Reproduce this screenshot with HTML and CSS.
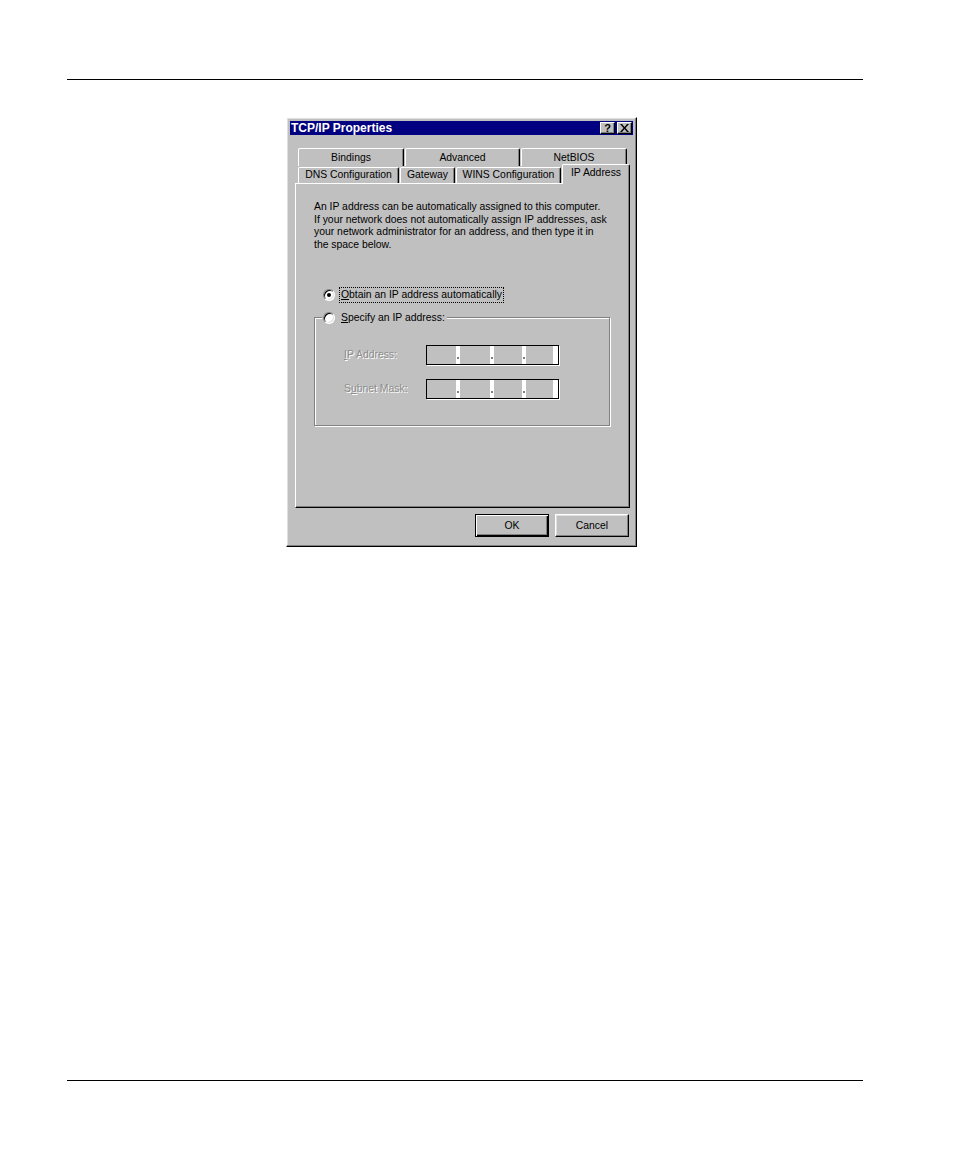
FILE: index.html
```html
<!DOCTYPE html>
<html>
<head>
<meta charset="utf-8">
<title>TCP/IP Properties</title>
<link rel="stylesheet" href="styles.css">
</head>
<body>
<div class="page">
  <div class="rule"></div>
  <div class="dialog">
    <div class="titlebar">
      <span class="title">TCP/IP Properties</span>
      <div class="caption-btns">
        <span class="cap-btn help">?</span>
        <span class="cap-btn close">
          <svg width="9" height="8" viewBox="0 0 9 8"><path d="M0 0h2l2.5 3 2.5-3h2l-3.5 4 3.5 4h-2l-2.5-3-2.5 3h-2l3.5-4z" fill="#000"/></svg>
        </span>
      </div>
    </div>
    <div class="tabs">
      <div class="tab-row back">
        <div class="tab w-bind">Bindings</div>
        <div class="tab w-adv">Advanced</div>
        <div class="tab w-net">NetBIOS</div>
      </div>
      <div class="tab-row front">
        <div class="tab w-dns">DNS Configuration</div>
        <div class="tab w-gw">Gateway</div>
        <div class="tab w-wins">WINS Configuration</div>
        <div class="tab selected w-ip">IP Address</div>
      </div>
    </div>
    <div class="panel">
      <p class="intro">An IP address can be automatically assigned to this computer.<br>If your network does not automatically assign IP addresses, ask<br>your network administrator for an address, and then type it in<br>the space below.</p>
      <div class="radio-row">
        <span class="radio"><span class="dot"></span></span>
        <span class="radio-label focus"><u>O</u>btain an IP address automatically</span>
      </div>
      <fieldset class="group">
        <legend class="legend">
          <span class="radio"></span>
          <span class="legend-text"><u>S</u>pecify an IP address:</span>
        </legend>
        <div class="field-row first">
          <span class="field-label"><u>I</u>P Address:</span>
          <div class="ipbox">
            <span class="seg s1"></span><span class="sep"><i></i></span>
            <span class="seg s2"></span><span class="sep"><i></i></span>
            <span class="seg s3"></span><span class="sep"><i></i></span>
            <span class="seg s4"></span><span class="sep end"></span>
          </div>
        </div>
        <div class="field-row">
          <span class="field-label">S<u>u</u>bnet Mask:</span>
          <div class="ipbox">
            <span class="seg s1"></span><span class="sep"><i></i></span>
            <span class="seg s2"></span><span class="sep"><i></i></span>
            <span class="seg s3"></span><span class="sep"><i></i></span>
            <span class="seg s4"></span><span class="sep end"></span>
          </div>
        </div>
      </fieldset>
    </div>
    <div class="buttons">
      <div class="btn default">OK</div>
      <div class="btn">Cancel</div>
    </div>
  </div>
  <div class="rule bottom"></div>
</div>
</body>
</html>
```
FILE: styles.css
```css
html, body {
  margin: 0;
  padding: 0;
  background: #fff;
}
body {
  font-family: "Liberation Sans", Arial, sans-serif;
  color: #000;
}
.page {
  padding: 79px 0 0 67px;
  width: 796px;
}
.rule {
  height: 1px;
  width: 796px;
  background: #000;
}
.rule.bottom {
  margin-top: 533px;
}
.dialog {
  box-sizing: border-box;
  width: 351px;
  height: 430px;
  margin: 37px 0 0 219px;
  background: #c0c0c0;
  border: 1px solid;
  border-color: #fff #000 #000 #fff;
  box-shadow: inset -1px -1px 0 #808080, inset 1px 1px 0 #dfdfdf;
  padding: 3px;
  display: flex;
  flex-direction: column;
}
.titlebar {
  height: 14px;
  background: #000080;
  display: flex;
  align-items: center;
  justify-content: space-between;
}
.title {
  color: #fff;
  font-weight: bold;
  font-size: 12px;
  padding-left: 1px;
  line-height: 14px;
}
.caption-btns {
  display: flex;
  gap: 2px;
  margin-right: 1px;
}
.cap-btn {
  box-sizing: border-box;
  width: 15px;
  height: 12px;
  background: #c0c0c0;
  border: 1px solid;
  border-color: #fff #000 #000 #fff;
  box-shadow: inset -1px -1px 0 #808080;
  display: flex;
  align-items: center;
  justify-content: center;
  font-size: 11px;
  font-weight: bold;
  line-height: 10px;
}
.cap-btn svg {
  display: block;
}
.tabs {
  margin-top: 13px;
  padding-left: 8px;
}
.tab-row {
  display: flex;
  gap: 1px;
  font-size: 10.4px;
}
.tab-row.back {
  height: 18px;
  align-items: flex-start;
}
.tab-row.front {
  height: 17px;
  align-items: flex-end;
}
.tab {
  box-sizing: border-box;
  background: #c0c0c0;
  border-top: 1px solid #fff;
  border-left: 1px solid #fff;
  border-right: 1px solid #000;
  border-radius: 2px 2px 0 0;
  box-shadow: inset -1px 0 0 #808080;
  text-align: center;
  white-space: nowrap;
}
.back .tab {
  height: 18px;
  line-height: 17px;
}
.front .tab {
  height: 16px;
  line-height: 14px;
}
.front .tab.selected {
  height: 20px;
  margin-bottom: -1px;
  line-height: 15px;
  position: relative;
  z-index: 1;
}
.w-bind { width: 106px; }
.w-adv { width: 115px; }
.w-net { width: 106px; }
.w-dns { width: 101px; }
.w-gw { width: 55px; }
.w-wins { width: 105px; }
.w-ip { width: 68px; }
.panel {
  box-sizing: border-box;
  width: 335px;
  height: 325px;
  margin-left: 5px;
  border: 1px solid;
  border-color: #fff #000 #000 #fff;
  box-shadow: inset -1px -1px 0 #808080;
  padding: 17px 18px 0 18px;
  font-size: 10.4px;
}
.intro {
  margin: 0;
  line-height: 12.67px;
  white-space: nowrap;
}
.radio-row {
  display: flex;
  align-items: center;
  height: 16px;
  margin-top: 35px;
}
.radio {
  box-sizing: border-box;
  width: 12px;
  height: 12px;
  border-radius: 50%;
  background: #fff;
  border: 1px solid;
  border-color: #808080 #fff #fff #808080;
  box-shadow: inset 1px 1px 0 #000, inset -1px -1px 0 #dfdfdf;
  display: flex;
  align-items: center;
  justify-content: center;
  flex: none;
}
.radio-row .radio {
  margin-left: 9px;
}
.dot {
  width: 4px;
  height: 4px;
  border-radius: 50%;
  background: #000;
}
.radio-label {
  margin-left: 4px;
  line-height: 14px;
  padding: 0 1px;
  border: 1px dotted #000;
}
.group {
  box-sizing: border-box;
  width: 296px;
  height: 114px;
  margin: 9px 0 0 0;
  padding: 0;
  border: 1px solid #808080;
  box-shadow: inset 1px 1px 0 #fff, 1px 1px 0 #fff;
  min-width: 0;
}
.legend {
  display: flex;
  align-items: center;
  margin-left: 7px;
  padding: 0 2px 0 1px;
  background: #c0c0c0;
  height: 12px;
  line-height: 12px;
}
.legend-text {
  margin-left: 6px;
}
.field-row {
  display: flex;
  align-items: center;
  height: 20px;
  margin-top: 14px;
  margin-left: 29px;
}
.field-row.first {
  margin-top: 21px;
}
.field-label {
  width: 82px;
  color: #8c8c8c;
  text-shadow: 1px 1px 0 #fff;
}
.ipbox {
  box-sizing: border-box;
  width: 133px;
  height: 20px;
  border: 1px solid #000;
  box-shadow: 1px 1px 0 #fff;
  display: flex;
}
.seg {
  background: #c0c0c0;
  height: 100%;
}
.s1 { width: 29px; }
.s2 { width: 30px; }
.s3 { width: 28px; }
.s4 { width: 27px; }
.sep {
  width: 4px;
  background: #fff;
  display: flex;
  flex-direction: column;
  justify-content: flex-end;
  padding-bottom: 5px;
  box-sizing: border-box;
}
.sep.end {
  width: 5px;
}
.sep i {
  display: block;
  width: 2px;
  height: 2px;
  margin-left: 1px;
  background: #808080;
}
.buttons {
  display: flex;
  justify-content: flex-end;
  gap: 6px;
  margin-top: 6px;
  margin-right: 4px;
}
.btn {
  box-sizing: border-box;
  width: 74px;
  height: 23px;
  background: #c0c0c0;
  border: 1px solid;
  border-color: #fff #000 #000 #fff;
  box-shadow: inset -1px -1px 0 #808080, inset 1px 1px 0 #dfdfdf;
  font-size: 10.4px;
  display: flex;
  align-items: center;
  justify-content: center;
}
.btn.default {
  border-color: #000;
  box-shadow: inset 1px 1px 0 #fff, inset -1px -1px 0 #000, inset -2px -2px 0 #808080;
}
```
